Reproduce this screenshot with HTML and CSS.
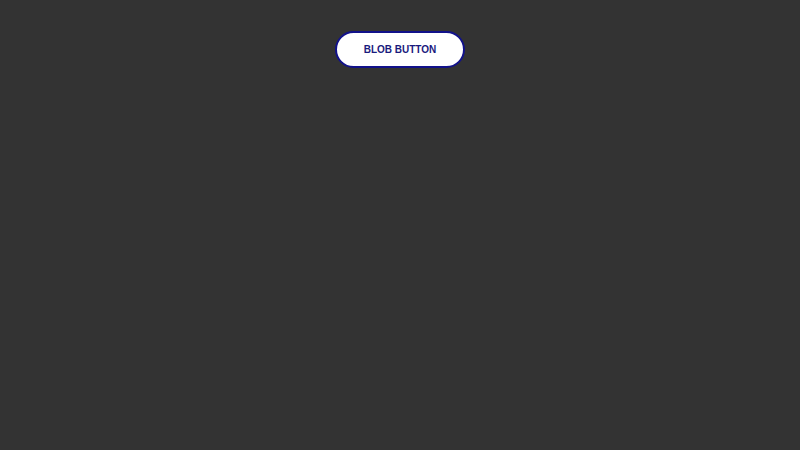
FILE: index.html
```html
<!DOCTYPE html>
<html lang="en">
<head>
    <meta charset="UTF-8">
    <title>Blob Button</title>
    <link rel="stylesheet" href="styles.css">
</head>
<body>
    <div class="wrap">
        <button class="blob-btn">BLOB BUTTON</button>
    </div>
</body>
</html>
```

FILE: styles.css
```css
body {
    margin: 0;
    background-color: #333333;
    font-family: "Liberation Sans", Arial, sans-serif;
}

.wrap {
    display: flex;
    justify-content: center;
    padding-top: 31px;
}

.blob-btn {
    width: 130px;
    height: 37px;
    background-color: #ffffff;
    color: #1a1a7e;
    border: 2px solid #12128a;
    border-radius: 20px;
    font-family: "Liberation Sans", Arial, sans-serif;
    font-size: 10px;
    font-weight: bold;
    cursor: pointer;
}
```
